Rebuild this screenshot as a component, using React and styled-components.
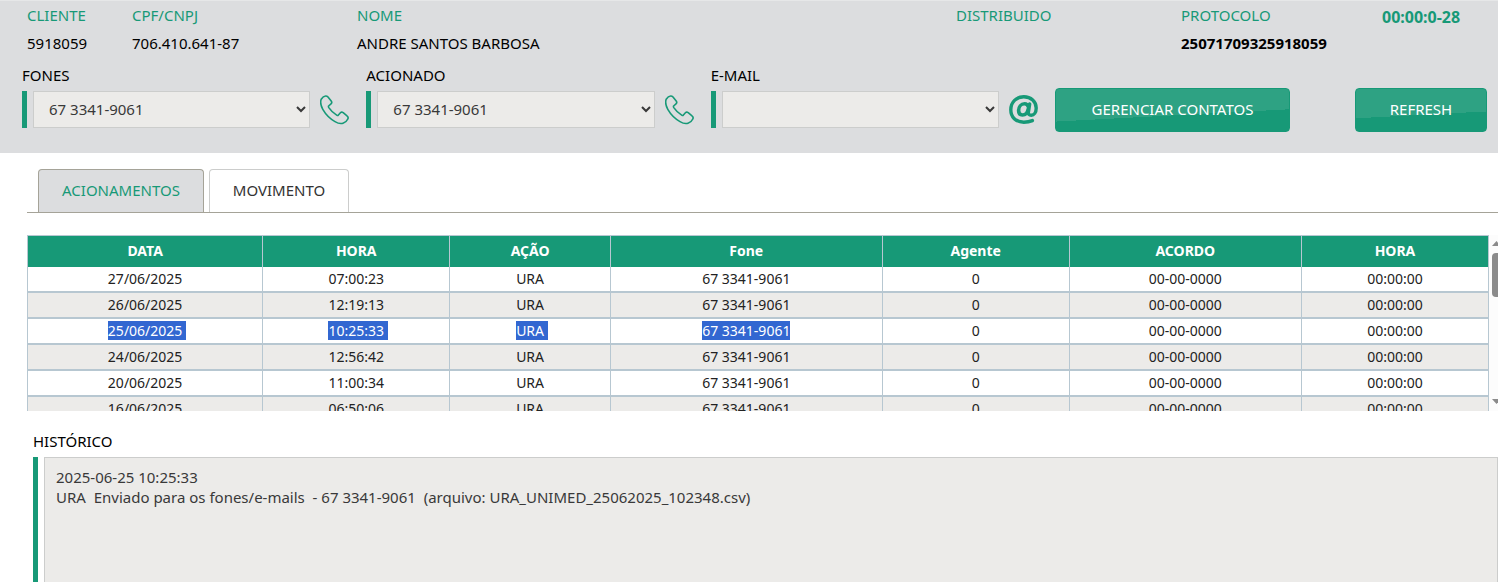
import React from 'react';
import styled, { createGlobalStyle } from 'styled-components';

const green = '#179977';
const line = '#b7c7d1';

const GlobalStyle = createGlobalStyle`
  * { box-sizing: border-box; }
  body { margin: 0; background: #fff; }
  body, button, select, textarea { font-family: "Noto Sans", "Open Sans", sans-serif; font-size: 15px; }
`;

const Page = styled.div`
  display: flex;
  flex-direction: column;
  min-height: 100vh;
  color: #000;
  line-height: 20px;
`;

const Header = styled.header`
  background: #dcdddf;
  border-top: 1px solid #e6e7e8;
  padding: 4px 0 21px;
`;

const ClientGrid = styled.dl`
  display: grid;
  grid-template-columns: 105px 225px 1fr 225px 201px 116px;
  margin: 0;
  padding-left: 27px;
`;

const Term = styled.dt`
  color: ${green};
`;

const Detail = styled.dd`
  margin: 8px 0 0;
  font-weight: ${(p) => (p.$bold ? 700 : 400)};
`;

const Timer = styled.strong`
  color: ${green};
  font-size: 16px;
  line-height: 24px;
`;

const ContactRow = styled.div`
  display: flex;
  align-items: flex-end;
  padding: 12px 11px 0 22px;
`;

const Field = styled.div`
  flex: 1;
  min-width: 0;
  padding-right: 17px;
  margin-bottom: 4px;
`;

const FieldLabel = styled.label`
  display: block;
  height: 20px;
`;

const FieldLine = styled.div`
  display: flex;
  align-items: center;
  gap: 10px;
  margin-top: 6px;
`;

const Marked = styled.div`
  display: flex;
  flex: 1;
  min-width: 0;
  gap: 6px;
  min-height: 37px;

  &::before {
    content: "";
    flex: none;
    width: 5px;
    background: ${green};
  }
`;

const Select = styled.select`
  flex: 1;
  min-width: 0;
  padding: 0 0 2px 11px;
  border: 1px solid #cccdcc;
  border-radius: 0;
  background-color: #ecebe9;
  color: #393939;
`;

const IconButton = styled.button`
  display: flex;
  padding: 0;
  border: 0;
  background: none;
  color: ${green};
`;

const Action = styled.button`
  height: 44px;
  width: ${(p) => p.$width}px;
  margin-left: ${(p) => p.$gap || 0}px;
  padding: 0 0 2px;
  border: 1px solid ${green};
  border-radius: 4px;
  background: linear-gradient(177deg, #2ea283 60%, ${green} 60%);
  color: #fff;
`;

const Tabs = styled.div`
  display: flex;
  gap: 5px;
  margin: 16px 0 0 27px;
  padding-left: 11px;
  border-bottom: 1px solid #a5a398;
`;

const Tab = styled.button`
  width: ${(p) => p.$width}px;
  height: 43px;
  padding: 0 0 2px;
  border: 1px solid ${(p) => (p.$active ? '#a5a398' : '#cccdcc')};
  border-bottom: 0;
  border-radius: 4px 4px 0 0;
  background: ${(p) => (p.$active ? '#dcdddf' : '#fff')};
  color: ${(p) => (p.$active ? green : '#333')};
`;

const TableArea = styled.div`
  display: flex;
  height: 176px;
  margin: 22px 0 0 27px;
  overflow: hidden;
`;

const Table = styled.table`
  flex: 1;
  align-self: flex-start;
  table-layout: fixed;
  border-collapse: separate;
  border-spacing: 0;
  border-right: 1px solid ${line};
  font-size: 14px;
`;

const HeadCell = styled.th`
  width: ${(p) => p.$width}%;
  height: 32px;
  padding: 0 0 2px;
  border: solid ${line};
  border-width: 1px 0 0 1px;
  background: ${green};
  color: #fff;
`;

const Cell = styled.td`
  height: 26px;
  padding: 0 0 2px;
  border: solid ${line};
  border-width: 0 0 2px 1px;
  text-align: center;
  line-height: 19px;
  color: #222;
`;

const Row = styled.tr`
  background: ${(p) => (p.$shaded ? '#ecebe9' : '#fff')};
`;

const Selected = styled.mark`
  display: inline-block;
  padding-right: ${(p) => p.$tail}px;
  margin-right: -${(p) => p.$tail}px;
  background: #3267d1;
  color: #fff;
`;

const Scrollbar = styled.div`
  display: flex;
  flex: none;
  width: 9px;
  background: #fcfcfc;
`;

const HistoryArea = styled.section`
  display: flex;
  flex: 1;
  flex-direction: column;
  padding: 20px 0 0 33px;
`;

const HistoryBox = styled(Marked)`
  margin-top: 6px;
`;

const HistoryText = styled.textarea`
  flex: 1;
  min-height: 120px;
  padding: 9px 11px;
  border: 1px solid #cccdcc;
  border-bottom: 0;
  border-radius: 0;
  background: #ecebe9;
  color: #393939;
  line-height: 20px;
  resize: none;
`;

const PhoneIcon = () => (
  <svg width="29" height="30" viewBox="0 0 29 30" fill="none" stroke={green} strokeWidth="1.6" strokeLinejoin="round" aria-hidden="true">
    <path d="M1.2 4.2 Q3.2 1.2 5.6 1 Q7 .9 8 2 L11.2 6 Q12.4 7.6 11 8.8 L8.6 11 Q8.2 11.6 8.8 12.6 Q12 17.4 17 20.4 Q17.8 20.8 18.4 20 L20.4 17.8 Q21.6 16.6 23.2 17.6 L27 20.8 Q28.8 22.2 27.8 24 Q26.4 27.2 23 28.2 Q19.6 29.4 15 26.6 Q7.4 22.4 2.8 14.4 Q-.4 8.6 1.2 4.2 Z" />
  </svg>
);

const AtIcon = () => (
  <svg width="29" height="29" viewBox="0 0 29 29" fill="none" stroke={green} strokeLinecap="round" strokeLinejoin="round" aria-hidden="true">
    <path strokeWidth="3.4" d="M23.4 25.6 Q19.6 27.2 14.8 27.2 C6.8 27.2 1.8 22.2 1.8 14.8 C1.8 7 7.4 1.8 14.8 1.8 C22 1.8 27.2 6.4 27.2 13 C27.2 17.6 25 20.2 22.2 20.2 C20.2 20.2 19 19 19.2 17" />
    <path strokeWidth="3.6" d="M20.6 9 L19.2 17.6 M19.4 12 C18.8 9.8 17.4 8.8 15.6 8.8 C12 8.8 9.6 12 9.6 15.6 C9.6 18.4 11 20 13.4 20 C16.4 20 18.6 17.4 19.2 14" />
  </svg>
);

const columns = [
  ['DATA', 16.1], ['HORA', 12.8], ['AÇÃO', 11], ['Fone', 18.6],
  ['Agente', 12.8], ['ACORDO', 15.9], ['HORA', 12.8],
];

const calls = [
  ['27/06/2025', '07:00:23'],
  ['26/06/2025', '12:19:13'],
  ['25/06/2025', '10:25:33'],
  ['24/06/2025', '12:56:42'],
  ['20/06/2025', '11:00:34'],
  ['16/06/2025', '06:50:06'],
];

const ContactField = ({ id, label, value, action, icon }) => (
  <Field>
    <FieldLabel htmlFor={id}>{label}</FieldLabel>
    <FieldLine>
      <Marked>
        <Select id={id} defaultValue={value}>
          <option value={value}>{value}</option>
        </Select>
      </Marked>
      <IconButton type="button" aria-label={action}>{icon}</IconButton>
    </FieldLine>
  </Field>
);

export default function App() {
  return (
    <Page>
      <GlobalStyle />
      <Header>
        <ClientGrid>
          <div><Term>CLIENTE</Term><Detail>5918059</Detail></div>
          <div><Term>CPF/CNPJ</Term><Detail>706.410.641-87</Detail></div>
          <div><Term>NOME</Term><Detail>ANDRE SANTOS BARBOSA</Detail></div>
          <div><Term>DISTRIBUIDO</Term><Detail /></div>
          <div><Term>PROTOCOLO</Term><Detail $bold>25071709325918059</Detail></div>
          <div><Timer>00:00:0-28</Timer></div>
        </ClientGrid>
        <ContactRow>
          <ContactField id="fones" label="FONES" value="67 3341-9061" action="Ligar" icon={<PhoneIcon />} />
          <ContactField id="acionado" label="ACIONADO" value="67 3341-9061" action="Ligar" icon={<PhoneIcon />} />
          <ContactField id="email" label="E-MAIL" value="" action="Enviar e-mail" icon={<AtIcon />} />
          <Action type="button" $width={235}>GERENCIAR CONTATOS</Action>
          <Action type="button" $width={132} $gap={65}>REFRESH</Action>
        </ContactRow>
      </Header>
      <Tabs role="tablist">
        <Tab type="button" role="tab" aria-selected="true" $active $width={166}>ACIONAMENTOS</Tab>
        <Tab type="button" role="tab" aria-selected="false" $width={140}>MOVIMENTO</Tab>
      </Tabs>
      <TableArea>
        <Table>
          <thead>
            <tr>
              {columns.map(([name, width], i) => <HeadCell key={i} $width={width}>{name}</HeadCell>)}
            </tr>
          </thead>
          <tbody>
            {calls.map(([date, time], r) => {
              const cells = [date, time, 'URA', '67 3341-9061', '0', '00-00-0000', '00:00:00'];
              return (
                <Row key={date} $shaded={r % 2 === 1}>
                  {cells.map((text, c) => (
                    <Cell key={c}>
                      {r === 2 && c < 4 ? <Selected $tail={c < 3 ? 4 : 0}>{text}</Selected> : text}
                    </Cell>
                  ))}
                </Row>
              );
            })}
          </tbody>
        </Table>
        <Scrollbar aria-hidden="true">
          <svg width="9" height="176" viewBox="0 0 9 176" fill="#8b8b8b">
            <path d="M7.5 6 L12 11 H3 Z" />
            <rect x="3" y="18" width="9" height="44" rx="4" />
            <path d="M3 164 H12 L7.5 169 Z" />
          </svg>
        </Scrollbar>
      </TableArea>
      <HistoryArea>
        <FieldLabel htmlFor="historico">HISTÓRICO</FieldLabel>
        <HistoryBox>
          <HistoryText
            id="historico"
            readOnly
            value={'2025-06-25 10:25:33\nURA  Enviado para os fones/e-mails  - 67 3341-9061  (arquivo: URA_UNIMED_25062025_102348.csv)'}
          />
        </HistoryBox>
      </HistoryArea>
    </Page>
  );
}
